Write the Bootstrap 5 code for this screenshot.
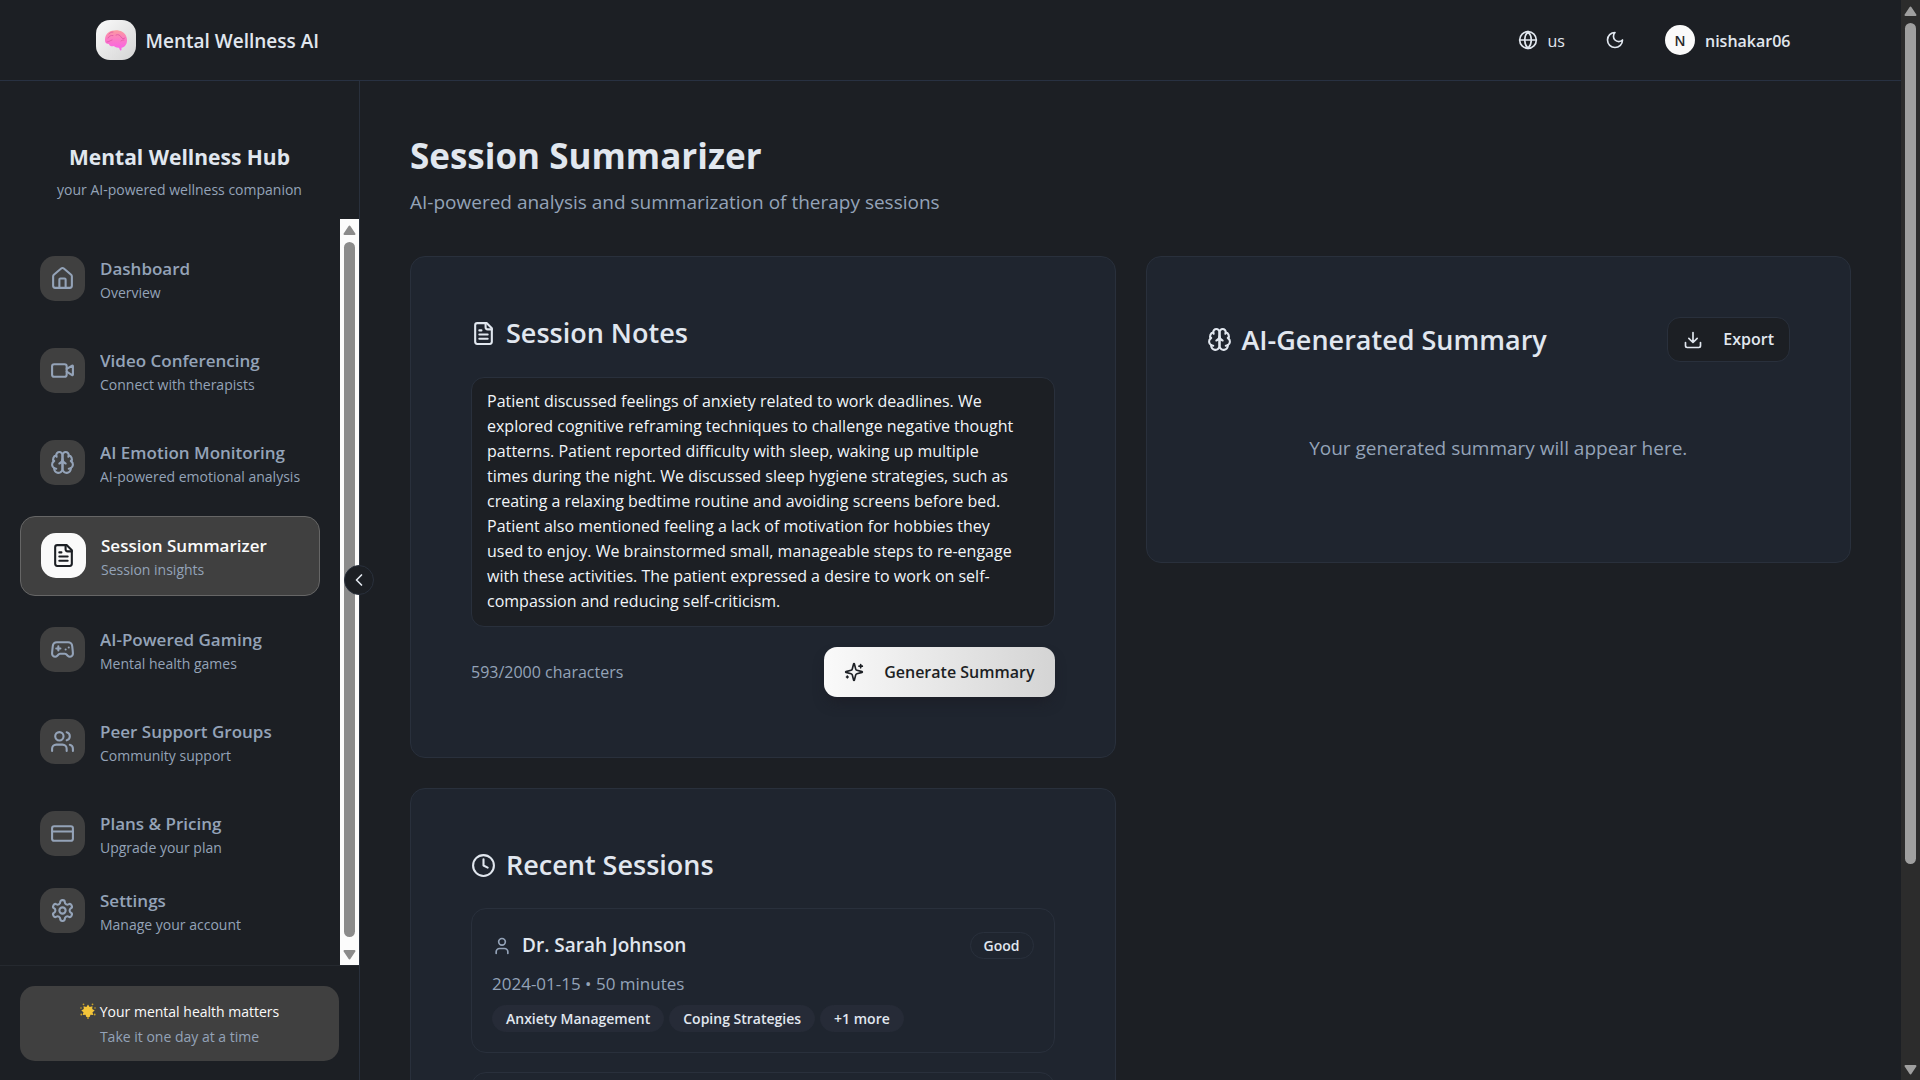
<!DOCTYPE html>
<html lang="en" data-bs-theme="dark">
<head>
<meta charset="utf-8">
<meta name="viewport" content="width=device-width, initial-scale=1">
<title>Session Summarizer - Mental Wellness AI</title>
<link href="https://cdn.jsdelivr.net/npm/bootstrap@5.3.0/dist/css/bootstrap.min.css" rel="stylesheet">
<style>
:root{--page:#1c1f24;--panel:#1f252f;--line:#29303c;--fg:#e1e7ef;--dim:#94a3b8;--chip:#404040}
body{font-family:"Open Sans","Noto Sans",sans-serif;font-size:16px;line-height:25px;background:var(--page);color:var(--fg)}
h1,h2,h3,p{margin:0}
h1,h2,h3{color:var(--fg)}
a{text-decoration:none;color:inherit}
svg.ic{width:25px;height:25px;fill:none;stroke:currentColor;stroke-width:2;stroke-linecap:round;stroke-linejoin:round;flex:none}
svg.ic-sm{width:20px;height:20px}
.dim{color:var(--dim)}
.topbar{height:81px;border-bottom:1px solid #283142;flex:none}
.topbar-inner{max-width:1750px;padding:0 20px}
.logo{width:40px;height:40px;border-radius:14px;background:linear-gradient(135deg,#fafafa,#d4d4d4);margin-right:10px}
.logo svg{width:24px;height:24px}
.brand-name{font-size:19px;font-weight:600}
.brand-name,.lang,.user-name{padding-top:2px}
.ghost{border:0;background:none;color:var(--fg);padding:0;gap:10px}
.tools{gap:40px;padding-right:15px}
.avatar{width:30px;height:30px;border-radius:50%;background:#fafafa;color:#27272a;font-size:14px;font-weight:600}
.user-name{font-weight:600}
.sidebar{width:360px;flex:none;border-right:1px solid var(--line)}
.side-head{height:138px;padding-top:59px}
.side-head h2{font-size:21px;line-height:34px;font-weight:700}
.side-head p{font-size:14px;line-height:28px;margin-top:2px}
.side-list{gap:15px;padding:21px 20px 20px}
.side-link{height:77px;padding:0 20px;gap:15px;color:var(--dim);border-radius:15px;flex:none}
.side-link.on{height:80px;background:var(--chip);border:1px solid #666}
.side-link.on .tile{background:#fafafa;color:#1c1f24}
.side-link.on .side-title{color:#fafafa}
.side-last{margin-top:-15px}
.tile{width:45px;height:45px;border-radius:15px;background:var(--chip);flex:none}
.side-text{padding-top:3px;overflow:hidden}
.side-title{font-size:17px;font-weight:600;line-height:25px}
.side-sub{font-size:14px;line-height:23px;color:var(--dim);white-space:nowrap;overflow:hidden}
.side-foot{border-top:1px solid #25292f;padding:20px;height:115px}
.note{background:var(--chip);border-radius:15px;height:75px;font-size:14px;line-height:25px}
.note b{font-weight:500;color:#fafafa}
.note svg{width:16px;height:16px}
.bar{width:19px;flex:none;background:#fcfcfc;color:#8b8b8b;padding:6px 0 5px}
.bar svg{width:13px;height:10px;fill:currentColor;stroke:currentColor;stroke-width:2;stroke-linejoin:round}
.bar i{display:block;width:11px;border-radius:6px;background:currentColor}
.bar-side i{flex:1;margin:7px 0 13px}
.bar-page{background:#2c2c2c;color:#9f9f9f}
.bar-page i{height:841px;margin:7px 0 auto}
.fold{width:30px;height:30px;right:-15px;top:484px;border-radius:50%;background:var(--page);border:1px solid var(--line);color:var(--fg);padding:0;z-index:2}
.content-area{padding:50px;min-width:0}
.content-area h1{font-size:35px;line-height:50px;font-weight:700}
.lede{font-size:19px;line-height:35px;margin-top:4px}
.boards{margin-top:36px;gap:30px}
.stack{gap:30px;flex:1 1 0;min-width:0}
.panel{background:var(--panel);border:1px solid var(--line);border-radius:15px;padding:60px}
.panel h2{font-size:27px;line-height:32px;font-weight:600;gap:10px}
.notes{height:250px;background:var(--page);border:1px solid var(--line);border-radius:13px;color:#f1f5f9;padding:11px 32px 11px 15px;font-size:16px;line-height:25px;resize:none;margin:28px 0 20px;overflow:hidden}
.notes:focus{background:var(--page);color:#f1f5f9}
.go{height:50px;border:0;border-radius:13px;padding:0 20px;gap:20px;font-size:16px;font-weight:600;color:#1c1f24;background:linear-gradient(90deg,#fafafa,#d4d4d4);box-shadow:0 8px 14px -4px rgba(28,28,36,.8)}
.export{height:45px;border:1px solid var(--line);border-radius:13px;padding:0 15px;gap:20px;font-size:16px;font-weight:600;color:var(--fg);background:var(--page)}
.blank{height:140px;padding-top:74px;font-size:19px}
.visit{border:1px solid var(--line);border-radius:15px;padding:23px 20px 18px;min-height:145px}
.visit h3{font-size:19px;line-height:27px;font-weight:600;gap:10px}
.visits{gap:19px;margin-top:27px}
.visit-date{font-size:17px;line-height:30px;margin:10px 0 6px}
.pills{gap:5px}
.pill{height:27px;line-height:25px;border:1px solid var(--line);border-radius:14px;padding:0 13px;font-size:14px;font-weight:600}
.pill-fill{background:#262b37;border-color:#262b37}
</style>
<script src="https://cdn.jsdelivr.net/npm/bootstrap@5.3.0/dist/js/bootstrap.bundle.min.js"></script>
</head>
<body class="d-flex vh-100 overflow-hidden">
<svg class="d-none" aria-hidden="true">
  <symbol id="file" viewBox="0 0 24 24"><path d="M15 2H6a2 2 0 0 0-2 2v16a2 2 0 0 0 2 2h12a2 2 0 0 0 2-2V7Z"/><path d="M14 2v4a2 2 0 0 0 2 2h4M10 9H8M16 13H8M16 17H8"/></symbol>
  <symbol id="brain" viewBox="0 0 24 24"><path d="M12 5a3 3 0 1 0-5.997.125 4 4 0 0 0-2.526 5.77 4 4 0 0 0 .556 6.588A4 4 0 1 0 12 18Z"/><path d="M12 5a3 3 0 1 1 5.997.125 4 4 0 0 1 2.526 5.77 4 4 0 0 1-.556 6.588A4 4 0 1 1 12 18Z"/><path d="M15 13a4.5 4.5 0 0 1-3-4 4.5 4.5 0 0 1-3 4M17.599 6.5a3 3 0 0 0 .399-1.375M6.003 5.125A3 3 0 0 0 6.401 6.5M3.477 10.896a4 4 0 0 1 .585-.396M19.938 10.5a4 4 0 0 1 .585.396M6 18a4 4 0 0 1-1.967-.516M19.967 17.484A4 4 0 0 1 18 18"/></symbol>
</svg>
<div class="d-flex flex-column flex-grow-1 overflow-hidden">
  <header class="topbar">
    <div class="topbar-inner d-flex align-items-center justify-content-between h-100 mx-auto">
      <a href="#" class="d-flex align-items-center">
        <span class="logo d-flex align-items-center justify-content-center">
          <svg viewBox="0 0 24 24"><defs><linearGradient id="pk" x1="0" y1="0" x2="0" y2="1"><stop offset="0" stop-color="#fb9a9f"/><stop offset=".5" stop-color="#fb78c8"/><stop offset="1" stop-color="#fa5eea"/></linearGradient></defs><path fill="url(#pk)" d="M1 13C.7 8 3 4 8 2.800c6-1.700 12 .5 14 5 1.500 3 1.500 7-.5 9.500-1 1.400-2.500 2.200-4 2.400v2c0 1-1.400 1-1.700 0l-.8-2c-2 .2-4-.4-5-1.700-2 .8-4.500.2-5.200-2C2.500 15.800 1.200 15 1 13Z"/><path fill="none" stroke="#e055a5" stroke-width=".8" stroke-linecap="round" d="M4 10c1-2 3-3 5-2.500M9 4c-2 0-3 1-4 2M12 7c2-1 4 0 5 2s3 2 4 1M3 14c2 0 3-1.500 5-2M17 13c1-1 2-1 3-1"/></svg>
        </span>
        <span class="brand-name">Mental Wellness AI</span>
      </a>
      <div class="tools d-flex align-items-center">
        <button class="ghost d-flex align-items-center" type="button" aria-label="Language">
          <svg class="ic ic-sm" viewBox="0 0 24 24"><circle cx="12" cy="12" r="10"/><path d="M12 2a14.500 14.500 0 0 0 0 20 14.500 14.500 0 0 0 0-20M2 12h20"/></svg>
          <span class="lang">us</span>
        </button>
        <button class="ghost d-flex" type="button" aria-label="Toggle theme">
          <svg class="ic ic-sm" viewBox="0 0 24 24"><path d="M12 3a6 6 0 0 0 9 9 9 9 0 1 1-9-9Z"/></svg>
        </button>
        <button class="ghost d-flex align-items-center" type="button">
          <span class="avatar d-flex align-items-center justify-content-center">N</span>
          <span class="user-name">nishakar06</span>
        </button>
      </div>
    </div>
  </header>
  <div class="d-flex flex-grow-1 overflow-hidden position-relative">
    <aside class="sidebar d-flex flex-column position-relative">
      <div class="side-head text-center">
        <h2>Mental Wellness Hub</h2>
        <p class="dim">your AI-powered wellness companion</p>
      </div>
      <div class="d-flex flex-grow-1 overflow-hidden">
        <nav class="side-list d-flex flex-column flex-grow-1 overflow-hidden">
          <a href="#" class="side-link d-flex align-items-center"><span class="tile d-flex align-items-center justify-content-center"><svg class="ic" viewBox="0 0 24 24"><path d="M15 21v-8a1 1 0 0 0-1-1h-4a1 1 0 0 0-1 1v8"/><path d="M3 10a2 2 0 0 1 .709-1.528l7-5.999a2 2 0 0 1 2.582 0l7 5.999A2 2 0 0 1 21 10v9a2 2 0 0 1-2 2H5a2 2 0 0 1-2-2z"/></svg></span><span class="side-text"><span class="side-title d-block">Dashboard</span><span class="side-sub d-block">Overview</span></span></a>
          <a href="#" class="side-link d-flex align-items-center"><span class="tile d-flex align-items-center justify-content-center"><svg class="ic" viewBox="0 0 24 24"><path d="m16 13 5.223 3.482a.5.5 0 0 0 .777-.416V7.870a.5.5 0 0 0-.752-.432L16 10.500"/><rect x="2" y="6" width="14" height="12" rx="2"/></svg></span><span class="side-text"><span class="side-title d-block">Video Conferencing</span><span class="side-sub d-block">Connect with therapists</span></span></a>
          <a href="#" class="side-link d-flex align-items-center"><span class="tile d-flex align-items-center justify-content-center"><svg class="ic"><use href="#brain"/></svg></span><span class="side-text"><span class="side-title d-block">AI Emotion Monitoring</span><span class="side-sub d-block">AI-powered emotional analysis</span></span></a>
          <a href="#" class="side-link on d-flex align-items-center" aria-current="page"><span class="tile d-flex align-items-center justify-content-center"><svg class="ic"><use href="#file"/></svg></span><span class="side-text"><span class="side-title d-block">Session Summarizer</span><span class="side-sub d-block">Session insights</span></span></a>
          <a href="#" class="side-link d-flex align-items-center"><span class="tile d-flex align-items-center justify-content-center"><svg class="ic" viewBox="0 0 24 24"><path d="M6 11h4M8 9v4M15 12h.01M18 10h.01"/><path d="M17.320 5H6.680a4 4 0 0 0-3.978 3.590c-.006.052-.01.101-.017.152C2.604 9.416 2 14.456 2 16a3 3 0 0 0 3 3c1 0 1.500-.5 2-1l1.414-1.414A2 2 0 0 1 9.828 16h4.344a2 2 0 0 1 1.414.586L17 18c.5.5 1 1 2 1a3 3 0 0 0 3-3c0-1.545-.604-6.584-.685-7.258A4 4 0 0 0 17.320 5z"/></svg></span><span class="side-text"><span class="side-title d-block">AI-Powered Gaming</span><span class="side-sub d-block">Mental health games</span></span></a>
          <a href="#" class="side-link d-flex align-items-center"><span class="tile d-flex align-items-center justify-content-center"><svg class="ic" viewBox="0 0 24 24"><path d="M16 21v-2a4 4 0 0 0-4-4H6a4 4 0 0 0-4 4v2"/><circle cx="9" cy="7" r="4"/><path d="M22 21v-2a4 4 0 0 0-3-3.870M16 3.130a4 4 0 0 1 0 7.750"/></svg></span><span class="side-text"><span class="side-title d-block">Peer Support Groups</span><span class="side-sub d-block">Community support</span></span></a>
          <a href="#" class="side-link d-flex align-items-center"><span class="tile d-flex align-items-center justify-content-center"><svg class="ic" viewBox="0 0 24 24"><rect x="2" y="5" width="20" height="14" rx="2"/><path d="M2 10h20"/></svg></span><span class="side-text"><span class="side-title d-block">Plans &amp; Pricing</span><span class="side-sub d-block">Upgrade your plan</span></span></a>
          <a href="#" class="side-link side-last d-flex align-items-center"><span class="tile d-flex align-items-center justify-content-center"><svg class="ic" viewBox="0 0 24 24"><path d="M12.220 2h-.44a2 2 0 0 0-2 2v.18a2 2 0 0 1-1 1.730l-.43.25a2 2 0 0 1-2 0l-.15-.08a2 2 0 0 0-2.730.73l-.22.38a2 2 0 0 0 .73 2.730l.15.1a2 2 0 0 1 1 1.720v.51a2 2 0 0 1-1 1.740l-.15.09a2 2 0 0 0-.73 2.730l.22.38a2 2 0 0 0 2.730.73l.15-.08a2 2 0 0 1 2 0l.43.25a2 2 0 0 1 1 1.730V20a2 2 0 0 0 2 2h.44a2 2 0 0 0 2-2v-.18a2 2 0 0 1 1-1.730l.43-.25a2 2 0 0 1 2 0l.15.08a2 2 0 0 0 2.730-.73l.22-.39a2 2 0 0 0-.73-2.730l-.15-.08a2 2 0 0 1-1-1.740v-.5a2 2 0 0 1 1-1.740l.15-.09a2 2 0 0 0 .73-2.730l-.22-.38a2 2 0 0 0-2.730-.73l-.15.08a2 2 0 0 1-2 0l-.43-.25a2 2 0 0 1-1-1.730V4a2 2 0 0 0-2-2z"/><circle cx="12" cy="12" r="3"/></svg></span><span class="side-text"><span class="side-title d-block">Settings</span><span class="side-sub d-block">Manage your account</span></span></a>
        </nav>
        <div class="bar bar-side d-flex flex-column align-items-center" aria-hidden="true">
          <svg viewBox="0 0 13 10"><path d="M6.500 1.500 11.500 9h-10z"/></svg><i></i><svg viewBox="0 0 13 10"><path d="M6.500 8.500 11.500 1h-10z"/></svg>
        </div>
      </div>
      <div class="side-foot">
        <div class="note d-flex flex-column justify-content-center text-center">
          <b class="d-flex align-items-center justify-content-center gap-1"><svg viewBox="0 0 16 16"><path fill="#f3c53a" d="M8 1.500 9.600 4l2.900-.8-.3 2.800 2.500 1.500-2.200 1.700.8 2.800-2.800-.2L9.600 14H6.400l-.9-2.200-2.800.2.8-2.800-2.200-1.700L3.800 6l-.3-2.800 2.900.8z"/><g fill="#c9a227"><circle cx="8" cy="15" r=".9"/><circle cx="1.300" cy="11.500" r=".9"/><circle cx="14.700" cy="11.500" r=".9"/><circle cx="12.500" cy="1.300" r=".9"/><circle cx="3.500" cy="1.300" r=".9"/><circle cx="1" cy="5" r=".8"/><circle cx="15" cy="5" r=".8"/></g></svg>Your mental health matters</b>
          <span class="dim">Take it one day at a time</span>
        </div>
      </div>
      <button class="fold position-absolute d-flex align-items-center justify-content-center" type="button" aria-label="Collapse sidebar"><svg class="ic ic-sm" viewBox="0 0 24 24"><path d="m15 18-6-6 6-6"/></svg></button>
    </aside>
    <main class="content-area flex-grow-1">
      <h1>Session Summarizer</h1>
      <p class="lede dim">AI-powered analysis and summarization of therapy sessions</p>
      <div class="boards d-flex align-items-start">
        <div class="stack d-flex flex-column">
          <section class="panel">
            <h2 class="d-flex align-items-center"><svg class="ic"><use href="#file"/></svg><label for="notes">Session Notes</label></h2>
            <textarea id="notes" class="notes form-control">Patient discussed feelings of anxiety related to work deadlines. We explored cognitive reframing techniques to challenge negative thought patterns. Patient reported difficulty with sleep, waking up multiple times during the night. We discussed sleep hygiene strategies, such as creating a relaxing bedtime routine and avoiding screens before bed. Patient also mentioned feeling a lack of motivation for hobbies they used to enjoy. We brainstormed small, manageable steps to re-engage with these activities. The patient expressed a desire to work on self-compassion and reducing self-criticism.</textarea>
            <div class="d-flex align-items-center justify-content-between">
              <span class="dim">593/2000 characters</span>
              <button class="go d-flex align-items-center" type="button"><svg class="ic ic-sm" viewBox="0 0 24 24"><path d="M9.937 15.500A2 2 0 0 0 8.500 14.063l-6.135-1.582a.5.5 0 0 1 0-.962L8.500 9.936A2 2 0 0 0 9.937 8.500l1.582-6.135a.5.5 0 0 1 .963 0L14.063 8.500A2 2 0 0 0 15.500 9.937l6.135 1.581a.5.5 0 0 1 0 .964L15.500 14.063a2 2 0 0 0-1.437 1.437l-1.582 6.135a.5.5 0 0 1-.963 0zM20 3v4M22 5h-4M4 17v2M5 18H3"/></svg>Generate Summary</button>
            </div>
          </section>
          <section class="panel">
            <h2 class="d-flex align-items-center"><svg class="ic" viewBox="0 0 24 24"><circle cx="12" cy="12" r="10"/><path d="M12 6v6l4 2"/></svg>Recent Sessions</h2>
            <div class="visits d-flex flex-column">
              <article class="visit">
                <div class="d-flex align-items-center justify-content-between">
                  <h3 class="d-flex align-items-center"><svg class="ic ic-sm dim" viewBox="0 0 24 24"><path d="M19 21v-2a4 4 0 0 0-4-4H9a4 4 0 0 0-4 4v2"/><circle cx="12" cy="7" r="4"/></svg>Dr. Sarah Johnson</h3>
                  <span class="pill">Good</span>
                </div>
                <p class="visit-date dim">2024-01-15 • 50 minutes</p>
                <div class="pills d-flex"><span class="pill pill-fill">Anxiety Management</span><span class="pill pill-fill">Coping Strategies</span><span class="pill pill-fill">+1 more</span></div>
              </article>
              <article class="visit"></article>
            </div>
          </section>
        </div>
        <div class="stack d-flex flex-column">
          <section class="panel">
            <div class="d-flex align-items-center justify-content-between">
              <h2 class="d-flex align-items-center"><svg class="ic"><use href="#brain"/></svg>AI-Generated Summary</h2>
              <button class="export d-flex align-items-center" type="button"><svg class="ic ic-sm" viewBox="0 0 24 24"><path d="M21 15v4a2 2 0 0 1-2 2H5a2 2 0 0 1-2-2v-4M7 10l5 5 5-5M12 15V3"/></svg>Export</button>
            </div>
            <p class="blank dim text-center">Your generated summary will appear here.</p>
          </section>
        </div>
      </div>
    </main>
  </div>
</div>
<div class="bar bar-page d-flex flex-column align-items-center" aria-hidden="true">
  <svg viewBox="0 0 13 10"><path d="M6.500 1.500 11.500 9h-10z"/></svg><i></i><svg viewBox="0 0 13 10"><path d="M6.500 8.500 11.500 1h-10z"/></svg>
</div>
</body>
</html>
